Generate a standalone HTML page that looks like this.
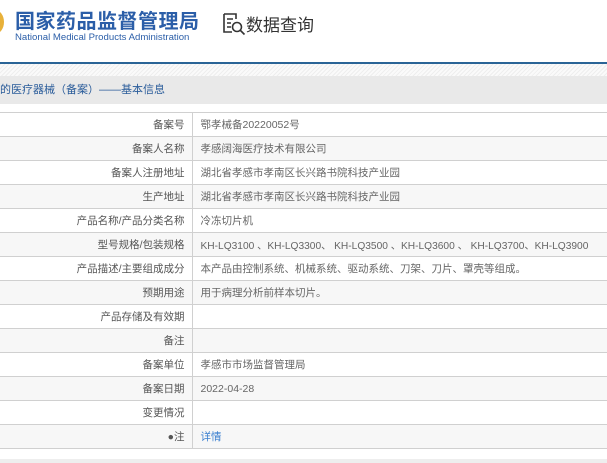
<!DOCTYPE html>
<html><head><meta charset="utf-8"><style>
*{margin:0;padding:0;box-sizing:border-box}
body{width:607px;height:463px;overflow:hidden;background:#fff;font-family:"Liberation Sans","Noto Sans CJK SC",sans-serif;position:relative}
.logo{position:absolute;left:-14px;top:10px;width:18px;height:24px;border-radius:50%;background:#e8b13a}
.t1{position:absolute;left:15px;top:5px;font-size:20px;font-weight:bold;color:#2b5ea8;letter-spacing:0.5px;white-space:nowrap}
.t2{position:absolute;left:15px;top:32px;font-size:9.6px;color:#2b5ea8;white-space:nowrap}
.q{position:absolute;left:246px;top:11px;font-size:17px;color:#333;white-space:nowrap}
.blue{position:absolute;left:0;top:62px;width:607px;height:2px;background:#2a6496}
.hatch{position:absolute;left:0;top:64px;width:607px;height:12px;background:repeating-linear-gradient(135deg,#eee 0 1px,#fafafa 1px 3px)}
.hdr{position:absolute;left:0;top:76px;width:607px;height:28px;background:#e9e9e9;font-size:11px;color:#2a5c9a;line-height:28px;white-space:nowrap}
table{position:absolute;left:0;top:112px;width:607px;border-collapse:collapse;font-size:10.5px;color:#666}
td{height:24px;border-top:1px solid #d0d0d0;white-space:nowrap}
tr:nth-child(even) td{background:#f7f7f7}
td.l{width:192px;text-align:right;padding-right:7px;border-right:1px solid #d0d0d0;color:#555}
td.v{padding-left:8px}
tr:last-child td{border-bottom:1px solid #d0d0d0}
.bot{position:absolute;left:0;top:459px;width:607px;height:4px;background:#eee}
a{color:#3a7fd0;text-decoration:none}
</style></head><body>
<div class="logo"></div>
<div class="t1">国家药品监督管理局</div>
<div class="t2">National Medical Products Administration</div>
<svg style="position:absolute;left:222px;top:12px" width="24" height="24" viewBox="0 0 24 24" fill="none" stroke="#333" stroke-width="1.6">
<path d="M2 2h12v5M2 2v18h8M5 7h6M5 11h4M5 15h4"/><circle cx="15" cy="15" r="4.5"/><path d="M18.5 18.5l4 4"/></svg>
<div class="q">数据查询</div>
<div class="blue"></div><div class="hatch"></div>
<div class="hdr">的医疗器械（备案）——基本信息</div>
<table>
<tr><td class="l">备案号</td><td class="v">鄂孝械备20220052号</td></tr>
<tr><td class="l">备案人名称</td><td class="v">孝感阔海医疗技术有限公司</td></tr>
<tr><td class="l">备案人注册地址</td><td class="v">湖北省孝感市孝南区长兴路书院科技产业园</td></tr>
<tr><td class="l">生产地址</td><td class="v">湖北省孝感市孝南区长兴路书院科技产业园</td></tr>
<tr><td class="l">产品名称/产品分类名称</td><td class="v">冷冻切片机</td></tr>
<tr><td class="l">型号规格/包装规格</td><td class="v" style="font-size:10.2px">KH-LQ3100 、KH-LQ3300、 KH-LQ3500 、KH-LQ3600 、 KH-LQ3700、KH-LQ3900</td></tr>
<tr><td class="l">产品描述/主要组成成分</td><td class="v">本产品由控制系统、机械系统、驱动系统、刀架、刀片、罩壳等组成。</td></tr>
<tr><td class="l">预期用途</td><td class="v">用于病理分析前样本切片。</td></tr>
<tr><td class="l">产品存储及有效期</td><td class="v"></td></tr>
<tr><td class="l">备注</td><td class="v"></td></tr>
<tr><td class="l">备案单位</td><td class="v">孝感市市场监督管理局</td></tr>
<tr><td class="l">备案日期</td><td class="v">2022-04-28</td></tr>
<tr><td class="l">变更情况</td><td class="v"></td></tr>
<tr><td class="l">●注</td><td class="v"><a>详情</a></td></tr>
</table>
<div class="bot"></div>
</body></html>
